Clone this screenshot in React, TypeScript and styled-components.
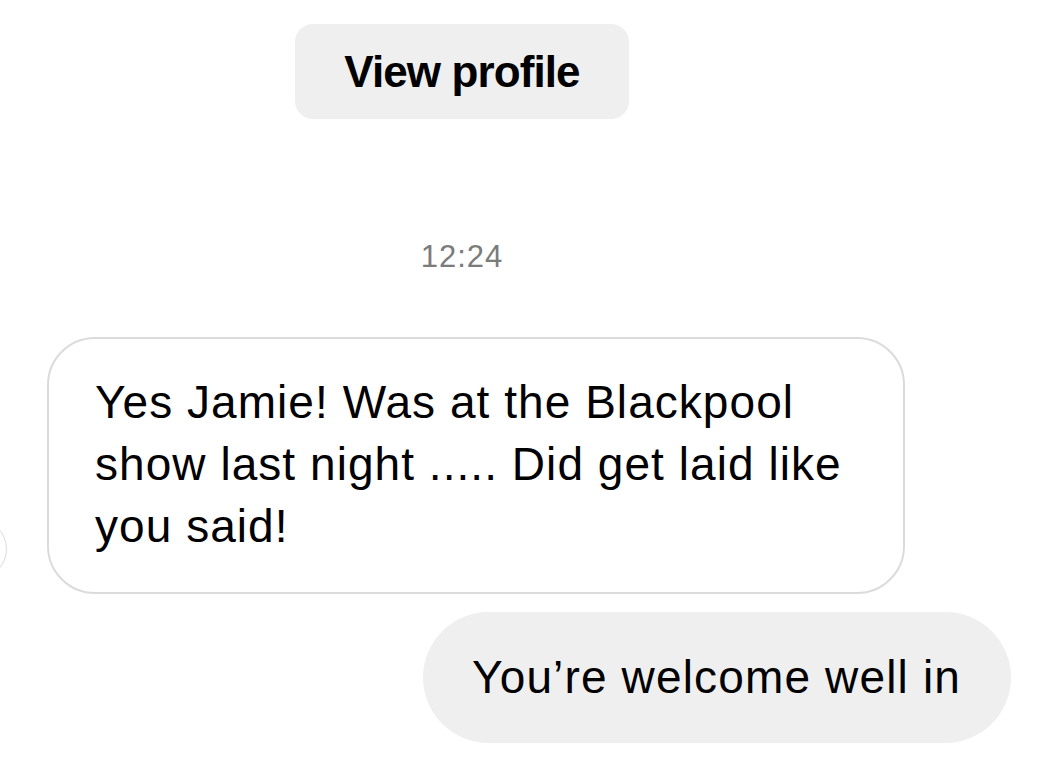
import React from "react";
import styled, { createGlobalStyle } from "styled-components";

const Global = createGlobalStyle`
  html, body {
    margin: 0;
    padding: 0;
    background: #ffffff;
    overflow: hidden;
  }
  body {
    font-family: "Liberation Sans", Arial, Helvetica, sans-serif;
    color: #000;
  }
`;

const Page = styled.div`
  width: 1046px;
  height: 763px;
  display: flex;
  flex-direction: column;
  padding-top: 24px;
  box-sizing: border-box;
  overflow: hidden;
`;

const Header = styled.div`
  display: flex;
  flex-direction: column;
  align-items: center;
  width: 924px;
`;

const ProfileButton = styled.button`
  height: 95px;
  padding: 0 49px;
  border: none;
  border-radius: 18px;
  background: #efefef;
  font-family: "Liberation Sans", Arial, sans-serif;
  font-weight: 700;
  font-size: 44px;
  letter-spacing: -0.9px;
  line-height: 95px;
  color: #000;
  cursor: pointer;
`;

const Time = styled.div`
  margin-top: 120px;
  font-size: 31px;
  line-height: 36px;
  letter-spacing: 1px;
  color: #7b7b7b;
`;

const IncomingRow = styled.div`
  margin-top: 62px;
  display: flex;
  align-items: flex-end;
  gap: 40px;
`;

const Avatar = styled.div`
  flex: none;
  width: 60px;
  height: 60px;
  margin-left: -53px;
  margin-bottom: 15px;
  border-radius: 50%;
  border: 1.5px solid #dbdbdb;
  box-sizing: border-box;
  background: #fff;
`;

const Bubble = styled.div<{ $outgoing?: boolean }>`
  box-sizing: border-box;
  font-size: 46px;
  line-height: 62px;
  color: #000;
  ${(p) =>
    p.$outgoing
      ? `
    letter-spacing: 1.15px;
    background: #efefef;
    border-radius: 66px;
    padding: 34px 50px 35px 49px;
  `
      : `
    letter-spacing: 1.05px;
    width: 858px;
    background: #fff;
    border: 2px solid #dbdbdb;
    border-radius: 48px;
    padding: 32px 40px 35px 46px;
  `}
`;

const OutgoingRow = styled.div`
  margin-top: 18px;
  display: flex;
  justify-content: flex-end;
  padding-right: 35px;
`;

export default function App() {
  return (
    <>
      <Global />
      <Page>
        <Header>
          <ProfileButton>View profile</ProfileButton>
          <Time>12:24</Time>
        </Header>
        <IncomingRow>
          <Avatar />
          <Bubble>
            Yes Jamie! Was at the Blackpool
            <br />
            show last night ..... Did get laid like
            <br />
            you said!
          </Bubble>
        </IncomingRow>
        <OutgoingRow>
          <Bubble $outgoing>You’re welcome well in</Bubble>
        </OutgoingRow>
      </Page>
    </>
  );
}
